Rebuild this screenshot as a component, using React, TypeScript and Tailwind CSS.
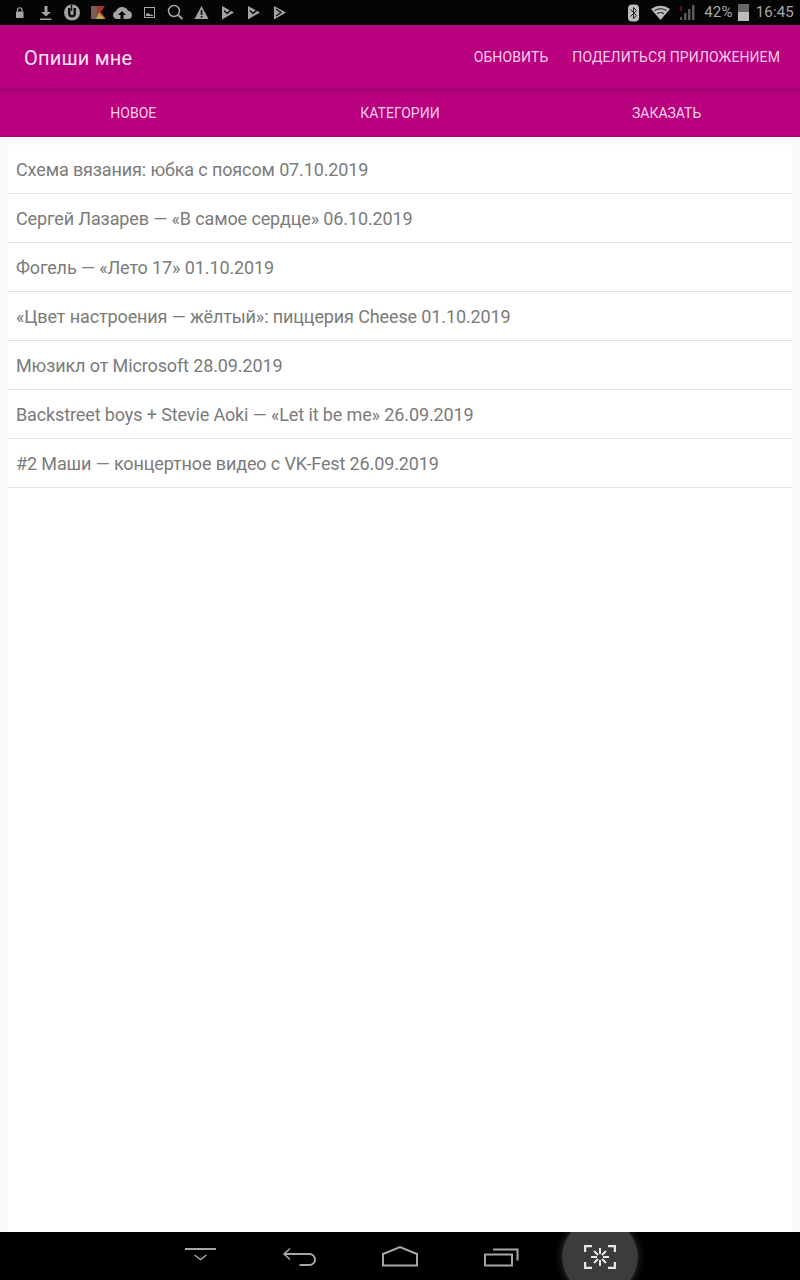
import React from "react";

const rows = [
  "Схема вязания: юбка с поясом 07.10.2019",
  "Сергей Лазарев — «В самое сердце» 06.10.2019",
  "Фогель — «Лето 17» 01.10.2019",
  "«Цвет настроения — жёлтый»: пиццерия Cheese 01.10.2019",
  "Мюзикл от Microsoft 28.09.2019",
  "Backstreet boys + Stevie Aoki — «Let it be me» 26.09.2019",
  "#2 Маши — концертное видео с VK-Fest 26.09.2019",
];

const G = "#a4a4a4";

function LeftIcons() {
  return (
    <svg width="300" height="25" viewBox="0 0 300 25" className="shrink-0">
      {/* lock */}
      <rect x="16" y="11.500" width="7.500" height="6.500" fill={G} />
      <path d="M17.500 11.500v-1.500a2.200 2.200 0 0 1 4.500 0v1.500" fill="none" stroke={G} strokeWidth="1.200" />
      {/* download */}
      <path d="M44.500 6h3v6h3.500l-5 4.500-5-4.500h3.500z" fill={G} />
      <rect x="40" y="18.500" width="11.500" height="1.500" fill={G} />
      {/* utorrent */}
      <circle cx="72" cy="12.500" r="8" fill={G} />
      <path d="M68 8v5.500a4 4 0 0 0 8 0V8h-2.500v5.500a1.500 1.500 0 0 1-3 0V8z" fill="#111" />
      <path d="M71.500 5v6" stroke="#111" strokeWidth="1.500" />
      {/* kaspersky */}
      <rect x="91" y="6" width="6" height="13" fill="#7d5a52" />
      <path d="M97 6h8l-4 6 5 7h-9z" fill="#a83232" />
      <path d="M99 12.500l6 6.500h-9z" fill="#b9a848" />
      {/* cloud upload */}
      <path d="M120.500 19h-4a4 4 0 0 1-.5-7.800 6.500 6.500 0 0 1 12-.5 4.200 4.200 0 0 1 .5 8.300h-5v-4h2.500l-4-4-4 4h2.500z" fill={G} />
      {/* image */}
      <rect x="144.500" y="7.500" width="10" height="10" fill="none" stroke={G} strokeWidth="1" />
      <path d="M146 16v-2l2-1 2 1.500 3 .5v1z" fill={G} />
      {/* search */}
      <circle cx="174" cy="11" r="5.500" fill="none" stroke={G} strokeWidth="1.500" />
      <path d="M178 15l4.500 4" stroke={G} strokeWidth="2" />
      {/* warning */}
      <path d="M201.500 6l7 13h-14z" fill={G} />
      <rect x="200.700" y="10" width="1.700" height="5" fill="#111" />
      <rect x="200.700" y="16" width="1.700" height="1.700" fill="#111" />
      {/* play store */}
      <path d="M222 6l12 6.500-12 7z" fill={G} />
      <path d="M224 10.500l3 3 4.500-4" fill="none" stroke="#111" strokeWidth="1.600" />
      <path d="M248 6l12 6.500-12 7z" fill={G} />
      <path d="M250 10.500l3 3 4.500-4" fill="none" stroke="#111" strokeWidth="1.600" />
      <path d="M274 6l12 6.500-12 7z" fill={G} />
      <path d="M276 9l5 3.500-5 3.500" fill="none" stroke="#111" strokeWidth="1.300" />
    </svg>
  );
}

function RightStatus() {
  return (
    <div className="flex items-center h-[25px] text-[#a8a8a8] text-[15px] font-['Roboto',sans-serif]">
      <svg width="16" height="18" viewBox="0 0 16 18" className="mr-[9px]">
        <rect x="2" y="0.500" width="11" height="17" rx="4" fill="#bcbcbc" />
        <path d="M4.500 5.500l6 6-3 3v-11l3 3-6 6" fill="none" stroke="#222" strokeWidth="1" />
      </svg>
      <svg width="20" height="16" viewBox="0 0 20 16" className="mr-[8px]">
        <path d="M0 4q9.500-6.500 19 0l-9.500 11z" fill="#bcbcbc" />
        <path d="M3.500 5.500q6-3.500 12 0M6 8.500q3.500-2 7 0" fill="none" stroke="#111" strokeWidth="1" />
      </svg>
      <svg width="16" height="17" viewBox="0 0 16 17" className="mr-[9px]">
        <rect x="1" y="13" width="2" height="3" fill="#5a5a5a" />
        <rect x="5" y="9" width="2.500" height="7" fill="#5a5a5a" />
        <rect x="9" y="5" width="2.500" height="11" fill="#5a5a5a" />
        <rect x="13" y="1" width="2.500" height="15" fill="#5a5a5a" />
        <rect x="1" y="2" width="2" height="5" fill="#5a1028" />
      </svg>
      <span className="mr-[5px] tracking-[0.2px]">42%</span>
      <div className="w-[11px] h-[17px] mr-[7px] flex flex-col">
        <div className="h-[8px] bg-[#666666]" />
        <div className="h-[9px] bg-[#bcbcbc]" />
      </div>
      <span className="mr-[6px] tracking-[0.2px]">16:45</span>
    </div>
  );
}

function NavIcons() {
  const c = "#a6a6a6";
  return (
    <svg width="340" height="48" viewBox="0 0 340 48" className="ml-[185px] shrink-0">
      {/* hide */}
      <rect x="0" y="16" width="31" height="2" fill={c} />
      <path d="M9.500 23l6 4.500 6-4.500" fill="none" stroke={c} strokeWidth="1.500" />
      {/* back */}
      <path d="M105 16.500l-6 5.500 6 5.500" fill="none" stroke={c} strokeWidth="1.500" />
      <path d="M99 22h25.500a5.500 5.500 0 0 1 0 11h-10" fill="none" stroke={c} strokeWidth="2" />
      {/* home */}
      <path d="M198 22l17-7 17 7v11.500h-34z" fill="none" stroke={c} strokeWidth="2" />
      {/* recent */}
      <rect x="300" y="22.500" width="27" height="11" fill="none" stroke={c} strokeWidth="2" />
      <path d="M308 17.500h24.500v11" fill="none" stroke={c} strokeWidth="2" />
    </svg>
  );
}

export default function App() {
  return (
    <div className="w-[800px] h-[1280px] flex flex-col bg-[#fafafa] font-['Roboto',sans-serif] overflow-hidden">
      <div className="h-[25px] bg-[#050505] flex items-start justify-between shrink-0">
        <LeftIcons />
        <RightStatus />
      </div>

      <div className="h-[64px] bg-[#b8007e] flex items-center justify-between pl-[24px] pr-[20px] shrink-0 pt-[1px]">
        <span className="text-[20px] tracking-[0.2px] text-[#fbe3f3]">Опиши мне</span>
        <div className="flex items-center gap-[24px] text-[14px] tracking-[0.1px] text-[#f9cfea]">
          <span>ОБНОВИТЬ</span>
          <span>ПОДЕЛИТЬСЯ ПРИЛОЖЕНИЕМ</span>
        </div>
      </div>

      <div className="h-[2px] bg-[#960068] shrink-0" />

      <div className="h-[46px] bg-[#b8007e] border-b border-[#a20070] grid grid-cols-3 items-center text-center text-[14px] text-[#f9cfea] shrink-0">
        <span>НОВОЕ</span>
        <span>КАТЕГОРИИ</span>
        <span>ЗАКАЗАТЬ</span>
      </div>

      <div className="flex-1 mx-[8px] mt-[8px] bg-white">
        {rows.map((r) => (
          <div
            key={r}
            className="h-[49px] border-b border-[#e2e2e2] pl-[8px] flex items-center text-[18px] tracking-[-0.12px] text-[#7b7b7b] pt-[1px]"
          >
            {r}
          </div>
        ))}
      </div>

      <div className="relative h-[48px] bg-black shrink-0 overflow-hidden flex items-start">
        <NavIcons />
        <div className="absolute left-[562px] top-[-13px] w-[76px] h-[76px] rounded-full bg-[#3c3c3c] shadow-[0_0_6px_2px_#222222] flex items-center justify-center">
          <svg width="32" height="24" viewBox="0 0 32 24">
            <path d="M1 7V1h7M31 7V1h-7M1 17v6h7M31 17v6h-7" fill="none" stroke="#e6e6e6" strokeWidth="2.500" />
            <path d="M16 3v6M16 15v6M7 12h6M19 12h6M10 6l4 4M22 6l-4 4M10 18l4-4M22 18l-4-4" stroke="#e6e6e6" strokeWidth="2" />
          </svg>
        </div>
      </div>
    </div>
  );
}
